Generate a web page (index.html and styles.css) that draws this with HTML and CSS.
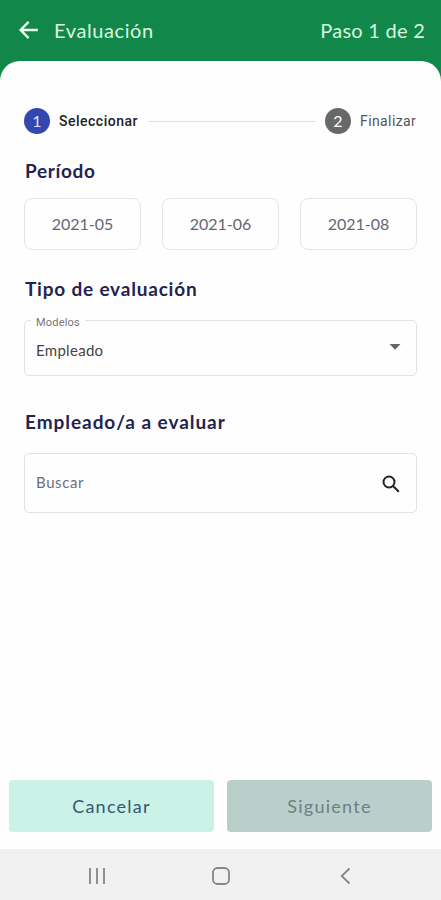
FILE: index.html
```html
<!DOCTYPE html>
<html lang="es">
<head>
<meta charset="utf-8">
<title>Evaluación</title>
<link rel="stylesheet" href="styles.css">
</head>
<body>
<div class="screen">
  <header class="topbar">
    <svg class="back" viewBox="0 0 20 20"><path d="M18.8 10H2.2M9.6 1.8 1.6 10l8 8.2"/></svg>
    <h1 class="title">Evaluación</h1>
    <span class="progress">Paso 1 de 2</span>
  </header>
  <main class="sheet">
    <div class="stepper">
      <span class="dot active">1</span>
      <span class="step first">Seleccionar</span>
      <span class="connector"></span>
      <span class="dot">2</span>
      <span class="step last">Finalizar</span>
    </div>
    <h2 class="heading period">Período</h2>
    <div class="chips">
      <button class="chip">2021-05</button>
      <button class="chip">2021-06</button>
      <button class="chip">2021-08</button>
    </div>
    <h2 class="heading type">Tipo de evaluación</h2>
    <div class="field select">
      <span class="label">Modelos</span>
      <span class="value">Empleado</span>
      <svg class="caret" viewBox="0 0 12 6"><path d="M.5 0h11L6 5.7z"/></svg>
    </div>
    <h2 class="heading employee">Empleado/a a evaluar</h2>
    <div class="field search">
      <span class="placeholder">Buscar</span>
      <svg class="lens" viewBox="0 0 18 18"><circle cx="7" cy="7" r="5.5"/><path d="m11 11 5.8 5.8"/></svg>
    </div>
  </main>
  <div class="actions">
    <button class="btn cancel"><span>Cancelar</span></button>
    <button class="btn next"><span>Siguiente</span></button>
  </div>
  <nav class="sysnav">
    <svg viewBox="0 0 20 20"><path d="M3 2v16M10 2v16M17 2v16"/></svg>
    <svg viewBox="0 0 20 20"><rect x="2" y="2" width="16" height="16" rx="4.5"/></svg>
    <svg viewBox="0 0 20 20"><path d="M14.5 2.5 6.7 10l7.8 7.5"/></svg>
  </nav>
</div>
</body>
</html>
```
FILE: styles.css
```css
* { box-sizing: border-box; }
body { margin: 0; font-family: Lato, "Liberation Sans", sans-serif; }
h1, h2 { margin: 0; }
button { border: 0; padding: 0; font: inherit; }
svg { display: block; fill: none; }

.screen {
  width: 441px;
  height: 900px;
  display: flex;
  flex-direction: column;
  background: linear-gradient(#118849 100px, #fefefe 100px);
}
.topbar {
  height: 61px;
  flex: none;
  display: flex;
  align-items: center;
  padding: 0 16px 2px 19px;
  color: #d9f6e0;
}
.back { width: 20px; height: 20px; stroke: #f0fff4; stroke-width: 2.4; }
.title { margin-left: 15px; font-size: 20px; font-weight: 400; letter-spacing: .6px; }
.progress { margin-left: auto; font-size: 20px; letter-spacing: .25px; }

.sheet {
  flex: 1;
  display: flex;
  flex-direction: column;
  padding: 47px 24px 0;
  border-radius: 20px 20px 0 0;
  background: #fefefe;
}
.stepper { display: flex; align-items: center; height: 26px; }
.dot {
  width: 26px;
  height: 26px;
  border-radius: 50%;
  background: #686868;
  color: #fff;
  font-size: 16px;
  line-height: 26px;
  text-align: center;
}
.dot.active { background: #3447ae; color: #dfe5ff; }
.step { margin-left: 9px; font-family: Roboto, sans-serif; font-size: 14px; white-space: nowrap; }
.first { width: 79px; color: #222; font-weight: 500; letter-spacing: .5px; }
.last { width: 57px; color: #555; letter-spacing: .4px; }
.connector { flex: 1; height: 1px; margin: 0 9px 0 10px; background: #dedede; }

.heading {
  height: 24px;
  padding-left: 1px;
  color: #23234f;
  font-size: 19px;
  font-weight: 700;
  line-height: 24px;
}
.period { margin-top: 25px; letter-spacing: .65px; }
.type { margin-top: 27px; letter-spacing: .8px; }
.employee { margin-top: 33px; letter-spacing: .95px; }

.chips { display: grid; grid-template-columns: repeat(3, 117px); justify-content: space-between; margin-top: 15px; }
.chip {
  height: 52px;
  padding-bottom: 2px;
  border: 1px solid #e4e4e8;
  border-radius: 8px;
  background: #fefefe;
  color: #666673;
  font-size: 16px;
}
.field {
  display: flex;
  align-items: center;
  justify-content: space-between;
  border: 1px solid #e2e2e4;
  border-radius: 5px;
  background: #fefefe;
}
.select { position: relative; height: 56px; margin-top: 19px; padding: 3px 15px 0 11px; }
.label {
  position: absolute;
  top: -5px;
  left: 6px;
  padding: 0 5px;
  background: #fefefe;
  color: #777;
  font-family: Roboto, sans-serif;
  font-size: 11px;
  line-height: 13px;
  letter-spacing: .2px;
}
.value { color: #444; font-size: 15px; letter-spacing: .3px; }
.caret { width: 12px; height: 6px; margin-top: -6px; fill: #666; }
.employee + .search { margin-top: 19px; }
.type + .select { margin-bottom: 1px; }
.search { height: 60px; padding: 0 16px 2px 11px; }
.placeholder { color: #707078; font-size: 15px; letter-spacing: .6px; }
.lens { width: 18px; height: 18px; margin-top: 3px; stroke: #222; stroke-width: 2; }

.actions { display: flex; gap: 13px; padding: 0 9px 17px; background: #fefefe; }
.btn { flex: 1; height: 52px; padding-bottom: 1px; border-radius: 4px; font-size: 18px; letter-spacing: 1.25px; }
.cancel { background: #caf2e7; color: #355678; }
.next { background: #bacfc9; color: #698087; }

.sysnav {
  height: 51px;
  flex: none;
  display: flex;
  align-items: center;
  justify-content: space-between;
  padding: 2px 86px 0 87px;
  background: #f1f1f1;
}
.sysnav svg { width: 20px; height: 20px; stroke: #868686; stroke-width: 1.8; }
```
